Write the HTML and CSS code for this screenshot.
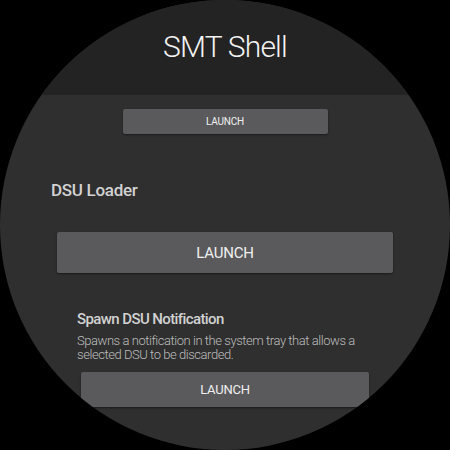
FILE: index.html
```html
<!DOCTYPE html>
<html>
<head>
<meta charset="utf-8">
<link rel="stylesheet" href="styles.css">
</head>
<body>
<div class="watch">
  <header class="top">
    <h1 class="title">SMT Shell</h1>
  </header>
  <main class="content">
    <div class="row-center">
      <button class="btn btn-sm">LAUNCH</button>
    </div>
    <section class="group">
      <h2 class="group-title">DSU Loader</h2>
      <button class="btn btn-lg">LAUNCH</button>
    </section>
    <section class="item">
      <h3 class="item-title">Spawn DSU Notification</h3>
      <p class="item-desc">Spawns a notification in the system tray that allows a selected DSU to be discarded.</p>
      <button class="btn btn-md">LAUNCH</button>
    </section>
  </main>
</div>
</body>
</html>
```
FILE: styles.css
```css
html, body {
  margin: 0;
  padding: 0;
  background: #000;
}
body {
  width: 450px;
  height: 450px;
  overflow: hidden;
  font-family: Roboto, "Noto Sans", sans-serif;
}
.watch {
  width: 450px;
  height: 450px;
  border-radius: 50%;
  overflow: hidden;
  background: #2f2f2f;
  display: flex;
  flex-direction: column;
}
.top {
  height: 95px;
  background: #232323;
  display: flex;
  justify-content: center;
  flex-shrink: 0;
}
.title {
  margin: 27px 0 0;
  font-size: 30px;
  line-height: 40px;
  font-weight: 300;
  color: #f2f2f2;
  letter-spacing: -0.8px;
}
.content {
  display: flex;
  flex-direction: column;
}
.row-center {
  display: flex;
  justify-content: center;
  padding-top: 14px;
}
.btn {
  border: none;
  background: #5a5a5c;
  color: #f0f0f0;
  font-family: Roboto, sans-serif;
  font-weight: 400;
  border-radius: 2px;
  box-shadow: 0 1px 2px rgba(0, 0, 0, 0.45);
  padding: 0;
  cursor: pointer;
}
.btn-sm {
  width: 205px;
  height: 25px;
  font-size: 10px;
  letter-spacing: -0.2px;
}
.group {
  display: flex;
  flex-direction: column;
  padding: 44px 0 0 51px;
}
.group-title {
  margin: 0;
  font-size: 17px;
  line-height: 24px;
  font-weight: 500;
  color: #d2d2d2;
  letter-spacing: -0.3px;
}
.btn-lg {
  margin: 30px 0 0 6px;
  width: 336px;
  height: 41px;
  font-size: 15px;
  letter-spacing: -0.2px;
}
.item {
  display: flex;
  flex-direction: column;
  padding: 36px 0 0 77px;
}
.item-title {
  margin: 0;
  font-size: 15px;
  line-height: 20px;
  font-weight: 500;
  color: #d2d2d2;
  letter-spacing: -0.6px;
}
.item-desc {
  margin: 5px 0 0;
  width: 290px;
  font-size: 13px;
  line-height: 14px;
  font-weight: 300;
  color: #bdbdbd;
  letter-spacing: -0.45px;
}
.btn-md {
  margin: 10px 0 0 4px;
  width: 288px;
  height: 35px;
  font-size: 13px;
  letter-spacing: -0.2px;
}
```
